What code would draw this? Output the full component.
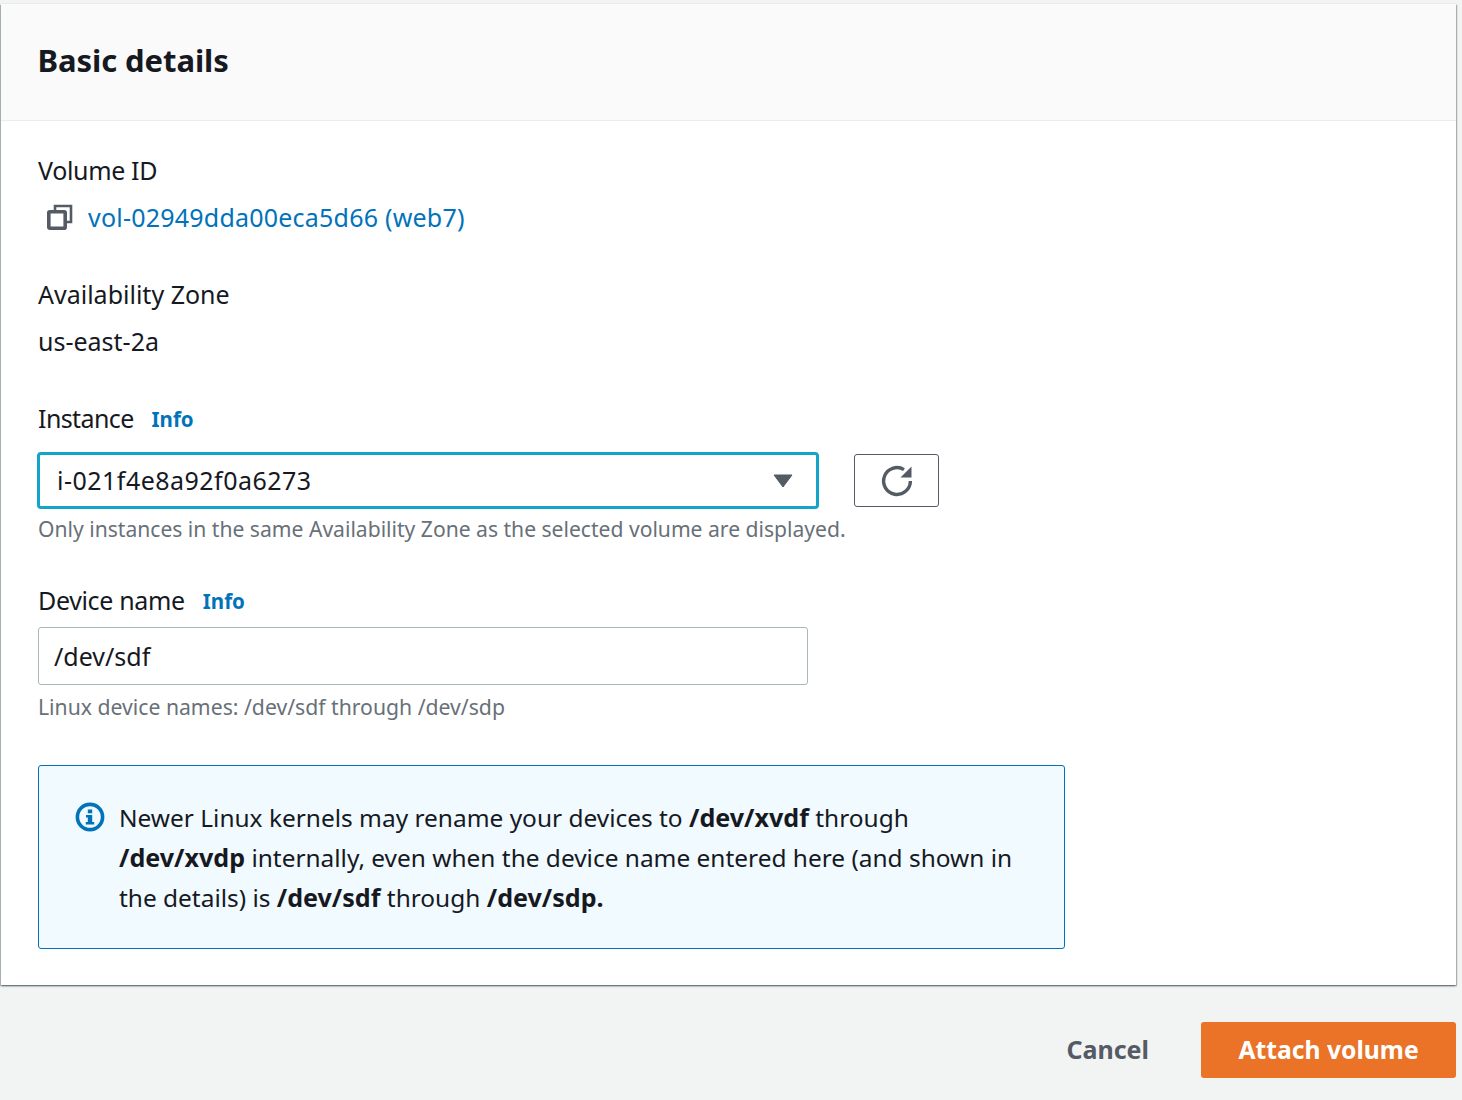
<div class="page">
  <section class="card">
    <header class="head"><h2>Basic details</h2></header>
    <div class="body">
      <div class="label first">Volume ID</div>
      <div class="value">
        <svg class="copy" width="28" height="28" viewBox="0 0 28 28" fill="none" stroke="#545b64">
          <rect x="2.8" y="8.8" width="16.4" height="16.4" rx="1" stroke-width="3.6"/>
          <path d="M9 8V3h16v16h-5" stroke-width="2.6"/>
        </svg>
        <a class="vol" href="#v">vol-02949dda00eca5d66 (web7)</a>
      </div>

      <div class="label az">Availability Zone</div>
      <div class="value plain">us-east-2a</div>

      <div class="label inst">Instance <a class="info" href="#i">Info</a></div>
      <div class="row">
        <div class="select">
          <span>i-021f4e8a92f0a6273</span>
          <svg class="caret" width="20" height="14" viewBox="0 0 20 14"><path d="M1 1h18l-9 12z" fill="#545b64" stroke="#545b64" stroke-linejoin="round"/></svg>
        </div>
        <button class="refresh" aria-label="Refresh">
          <svg width="34" height="34" viewBox="0 0 34 34" fill="none">
            <path d="M30.4 17A13.4 13.4 0 1 1 24 5.6" stroke="#545b64" stroke-width="3.4"/>
            <path d="M31.5 2.5V13.5H20.5z" fill="#545b64"/>
          </svg>
        </button>
      </div>
      <div class="hint one">Only instances in the same Availability Zone as the selected volume are displayed.</div>

      <div class="label dev">Device name <a class="info" href="#d">Info</a></div>
      <div class="input">/dev/sdf</div>
      <div class="hint two">Linux device names: /dev/sdf through /dev/sdp</div>

      <div class="alert">
        <svg class="i" width="30" height="30" viewBox="0 0 30 30" fill="none">
          <circle cx="15" cy="15" r="12.6" stroke="#0073bb" stroke-width="3.6"/>
          <rect x="12.8" y="7.5" width="4.4" height="3.8" fill="#0073bb"/>
          <path d="M11 13h6.200v7h2v2.600H10.800V20h2v-4.400H11z" fill="#0073bb"/>
        </svg>
        <p>Newer Linux kernels may rename your devices to <b>/dev/xvdf</b> through <b>/dev/xvdp</b> internally, even when the device name entered here (and shown in the details) is <b>/dev/sdf</b> through <b>/dev/sdp.</b></p>
      </div>
    </div>
  </section>
  <footer class="foot">
    <button class="cancel">Cancel</button>
    <button class="primary">Attach volume</button>
  </footer>
</div>

<style>
  :global(body) { margin: 0; background: #f2f3f3; }
  .page {
    width: 1462px; height: 1100px; box-sizing: border-box; padding-top: 4px;
    font-family: "Noto Sans", "Open Sans", sans-serif; color: #16191f; font-size: 25px; overflow: hidden;
  }
  .card {
    margin-left: 1px; width: 1455px; height: 981px; box-sizing: border-box; background: #fff;
    box-shadow: 0 1px 2px 0 rgba(0,28,36,.45), 1px 1px 1px 0 rgba(0,28,36,.2), -1px 1px 1px 0 rgba(0,28,36,.2);
  }
  .head { height: 117px; box-sizing: border-box; background: #fafafa; border-bottom: 1px solid #eaeded; padding: 0 37px; display: flex; align-items: center; }
  h2 { margin: 0 0 4px -.5px; font-size: 31px; font-weight: 700; line-height: 40px; letter-spacing: -.08px; }
  .body { padding: 0 37px; }
  .label { line-height: 34px; height: 34px; letter-spacing: -.35px; }
  .first { margin-top: 32px; }
  .value { height: 34px; line-height: 34px; margin-top: 13px; display: flex; align-items: center; }
  .copy { margin: 0 14px 0 8px; }
  .vol { letter-spacing: .22px; }
  a { color: #0073bb; text-decoration: none; }
  .az { margin-top: 43px; letter-spacing: 0; }
  .inst { margin-top: 43px; letter-spacing: -.6px; }
  .info { font-size: 20.500px; font-weight: 700; margin-left: 12px; letter-spacing: 0; vertical-align: 1px; }
  .row { display: flex; margin-top: 17px; gap: 35px; align-items: center; }
  .select {
    width: 782px; height: 57px; margin-left: -1px; box-sizing: border-box; border: 3px solid #12a4c9; border-radius: 4px;
    display: flex; align-items: center; justify-content: space-between; padding: 0 23px 2px 17px; letter-spacing: .48px;
  }
  .caret { margin-top: 2px; }
  .refresh { width: 85px; height: 53px; padding: 0; background: #fff; border: 1px solid #545b64; border-radius: 3px; display: flex; align-items: center; justify-content: center; }
  .hint { color: #687078; font-size: 21.200px; line-height: 30px; height: 30px; }
  .one { margin-top: 5px; font-size: 21.100px; }
  .two { margin-top: 7px; }
  .dev { margin-top: 39px; }
  .input {
    width: 770px; height: 58px; box-sizing: border-box; border: 1px solid #aab7b8; border-radius: 3px;
    margin-top: 10px; padding: 0 15px; line-height: 56px;
  }
  .alert {
    margin-top: 43px; width: 1027px; height: 184px; box-sizing: border-box; background: #f1faff; border: 1px solid #0073bb; border-radius: 3px;
    display: flex; padding: 32px 36px 0; gap: 14px;
  }
  .i { flex: none; margin-top: 4px; }
  .alert p { margin: 0; line-height: 40px; width: 905px; font-size: 24.450px; }
  .alert b { font-size: 25.100px; line-height: 0; }
  .foot { display: flex; justify-content: flex-end; align-items: center; margin-top: 37px; width: 1456px; gap: 52px; }
  button { font-family: inherit; }
  .cancel { background: none; border: 0; padding: 0 0 2px; font-size: 25px; font-weight: 700; color: #545b64; }
  .primary { width: 255px; height: 56px; background: #ea7327; border: 0; border-radius: 3px; color: #fff; font-size: 24.700px; font-weight: 700; padding: 0 0 2px; }
</style>
